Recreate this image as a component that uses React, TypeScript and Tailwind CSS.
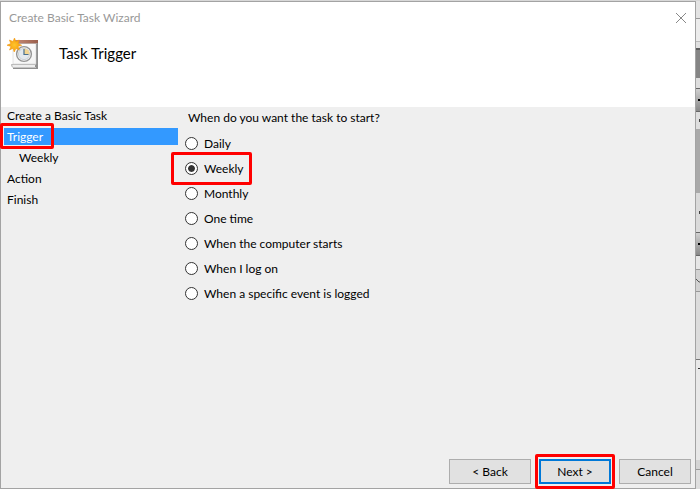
import { useState } from "react"

const steps = [
  { label: "Create a Basic Task" },
  { label: "Trigger", active: true },
  { label: "Weekly", nested: true },
  { label: "Action" },
  { label: "Finish" },
]

const triggers = [
  "Daily",
  "Weekly",
  "Monthly",
  "One time",
  "When the computer starts",
  "When I log on",
  "When a specific event is logged",
]

function TaskIcon() {
  return (
    <svg width="32" height="32" viewBox="0 0 32 32" aria-hidden="true">
      <defs>
        <linearGradient id="wood" x1="0" x2="1">
          <stop offset="0" stopColor="#c98d78" />
          <stop offset="1" stopColor="#9a5f4c" />
        </linearGradient>
        <linearGradient id="paper" x1="0" y1="0" x2="1" y2="1">
          <stop offset="0" stopColor="#ffffff" />
          <stop offset="1" stopColor="#f3f3f3" />
        </linearGradient>
        <radialGradient id="sun">
          <stop offset="0" stopColor="#ffc52b" />
          <stop offset="1" stopColor="#f59a0c" />
        </radialGradient>
      </defs>
      <path d="M29 5h2v26H6v-2h22z" fill="#8f8f8f" />
      <path d="M4 26h2v3h23v1H6l-2-2z" fill="#c4c4c4" />
      <path d="M5 26h23v3H6z" fill="#ededed" />
      <path d="M5 26h24v1H5z" fill="#b9b9b9" />
      <path d="M6 5h23v21H6z" fill="url(#paper)" stroke="#c9c9c9" strokeWidth="0.5" />
      <path d="M7 2h24v3H7z" fill="url(#wood)" />
      <path d="M8 5h22v1H8z" fill="#b9a49d" />
      <circle cx="17" cy="16" r="7.4" fill="#f7f8f9" stroke="#949494" strokeWidth="1.4" />
      <circle cx="17" cy="16" r="5.6" fill="#e3e9ee" stroke="#c3c8cc" strokeWidth="0.8" />
      <path d="M17 16.5V10.6A5.5 5.5 0 0 1 22.6 16.5z" fill="#f2d591" />
      <path d="M17 11v5.5h4.5" fill="none" stroke="#48708f" strokeWidth="1.2" />
      <path
        d="M7.5 0l1.3 3.6L12.2 2l-1.1 3.6 3.6 1.7-3.7 1.1 1.4 3.6-3.5-1.5L7.2 14 6 10.3 2.5 12 4 8.4 0 7.2l3.8-1.6L2.4 2 6 3.5z"
        fill="url(#sun)"
        stroke="#f39a13"
        strokeWidth="0.6"
      />
    </svg>
  )
}

// Sliver of the window that stays visible behind the wizard
function BackgroundSliver() {
  return (
    <div className="flex w-1 shrink-0 flex-col overflow-hidden bg-[#dedede]" aria-hidden="true">
      <div className="h-[18px] shrink-0 border-b border-[#999] bg-[#e3e3e3]" />
      <div className="h-[23px] shrink-0 border-b border-[#bbb] bg-[#ececec]" />
      <div className="h-1.5 shrink-0 bg-[#e0e0e0]" />
      <div className="h-[30px] shrink-0 border-t-2 border-[#5c5c5c] bg-[#858585]" />
      <div className="h-2.5 shrink-0 bg-[#dedede]" />
      <div className="flex h-6 shrink-0 items-center justify-end border-y border-[#666] bg-linear-to-b from-[#d0d0d0] to-[#888]">
        <span className="size-0.5 bg-black" />
      </div>
      <div className="flex h-[17px] shrink-0 items-center justify-end">
        <span className="h-[3px] w-px bg-[#444]" />
      </div>
      <div className="h-16 shrink-0 bg-[#a9a9a9]" />
      <div className="flex h-[39px] shrink-0 items-center justify-end bg-[#dadada]">
        <span className="h-[3px] w-px bg-[#444]" />
      </div>
      <div className="flex h-6 shrink-0 items-center justify-end border-y border-[#666] bg-linear-to-b from-[#d0d0d0] to-[#888]">
        <span className="size-0.5 bg-black" />
      </div>
      <div className="h-3.5 shrink-0 border-b border-[#999] bg-[#e6e6e6]" />
      <div className="flex h-[22px] shrink-0 items-center border-b border-[#999] bg-[#d2d2d2]">
        <svg width="4" height="4" viewBox="0 0 4 4">
          <path d="M0 0l3 3h1" fill="none" stroke="#555" />
        </svg>
      </div>
      <div className="h-[68px] shrink-0 border-b border-[#777] bg-[#dcdcdc]" />
      <div className="flex h-[100px] shrink-0 items-start justify-end bg-[#e8e8e8] pt-2">
        <span className="h-px w-0.5 bg-[#333]" />
      </div>
      <div className="h-2.5 shrink-0 border-b border-[#999] bg-[#d4d4d4]" />
      <div className="flex-1 bg-[#dedede]" />
    </div>
  )
}

export default function App() {
  const [trigger, setTrigger] = useState("Weekly")

  return (
    <div className="flex min-h-screen bg-[#d8d8d8] pt-px font-[Lato,'Open_Sans',sans-serif] text-xs text-black">
      <main className="flex min-w-0 flex-1 flex-col border border-[#a3a3a3] bg-[#efefef]">
        <header className="h-[105px] bg-white">
          <div className="flex h-8 items-center justify-between pr-2 pl-2">
            <h1 className="text-[#999]">Create Basic Task Wizard</h1>
            <button type="button" aria-label="Close">
              <svg width="12" height="12" viewBox="0 0 12 12" aria-hidden="true">
                <path d="M1 1l10 10M11 1L1 11" stroke="#888" fill="none" />
              </svg>
            </button>
          </div>
          <div className="flex items-center gap-5 pt-1 pl-1.5">
            <TaskIcon />
            <h2 className="text-[15px]">Task Trigger</h2>
          </div>
        </header>

        <div className="flex flex-1">
          <nav className="w-[177px] shrink-0 pl-[3px]">
            <ul>
              {steps.map((step) => (
                <li key={step.label} className="relative h-[21px]">
                  <a
                    href="#"
                    className={
                      step.active
                        ? "block bg-[#3399ff] pl-[3px] leading-[17px] text-white"
                        : step.nested
                          ? "block pl-[15px] leading-[17px]"
                          : "block pl-[3px] leading-[17px]"
                    }
                  >
                    {step.label}
                  </a>
                  {step.active && (
                    <span className="pointer-events-none absolute -top-[5px] -left-1 h-[26px] w-[54px] rounded-xs border-3 border-[#ff0000]" />
                  )}
                </li>
              ))}
            </ul>
          </nav>

          <fieldset className="pl-[7px]">
            <legend className="pt-0.5 pl-[3px] leading-[18px]">When do you want the task to start?</legend>
            <div className="pt-1">
              {triggers.map((name) => (
                <div key={name} className="relative flex h-[25px] items-center">
                  <label className="flex items-center gap-1.5">
                    <input
                      type="radio"
                      name="trigger"
                      value={name}
                      checked={trigger === name}
                      onChange={() => setTrigger(name)}
                      className="size-[13px] appearance-none rounded-full border border-[#333] bg-white checked:bg-[#333] checked:bg-clip-content checked:p-0.5 checked:shadow-[inset_0_0_0_2px_#fff]"
                    />
                    {name}
                  </label>
                  {name === "Weekly" && (
                    <span className="pointer-events-none absolute -top-1 -left-3.5 h-[33px] w-[81px] rounded-xs border-3 border-[#ff0000]" />
                  )}
                </div>
              ))}
            </div>
          </fieldset>
        </div>

        <footer className="flex justify-end gap-2 pr-1 pb-1">
          <button type="button" className="h-[25px] w-[82px] border border-[#adadad] bg-[#e1e1e1]">
            &lt; Back
          </button>
          <div className="relative">
            <button type="button" className="h-[25px] w-[72px] border-2 border-[#0078d7] bg-[#e1e1e1]">
              Next &gt;
            </button>
            <span className="pointer-events-none absolute -inset-x-1 -inset-y-[5px] rounded-xs border-3 border-[#ff0000]" />
          </div>
          <button type="button" className="h-[25px] w-[72px] border border-[#adadad] bg-[#e1e1e1]">
            Cancel
          </button>
        </footer>
      </main>
      <BackgroundSliver />
    </div>
  )
}
